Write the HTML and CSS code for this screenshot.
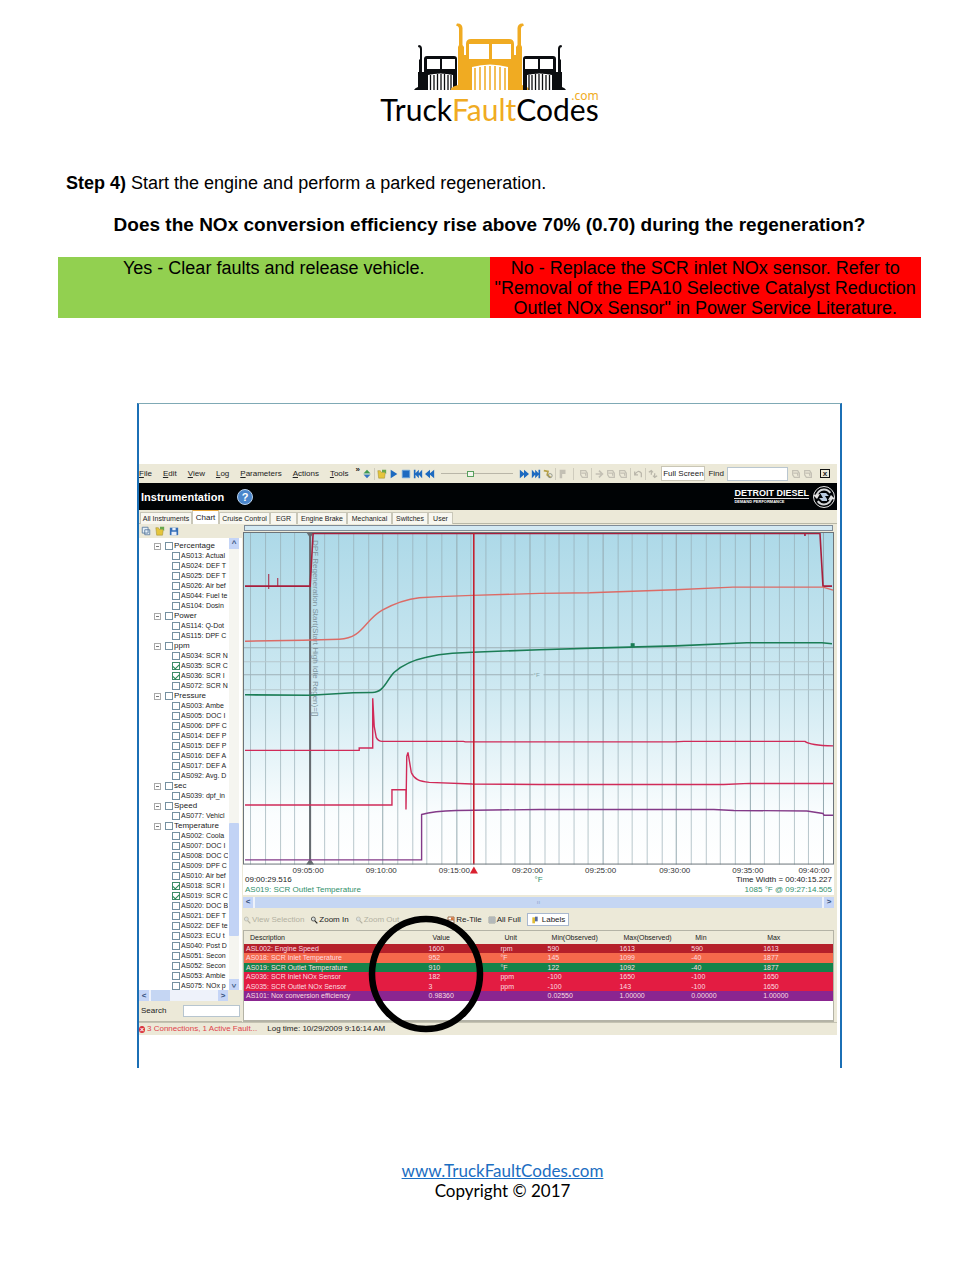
FILE: index.html
```html
<!DOCTYPE html>
<html lang="en">
<head>
<meta charset="utf-8">
<title>Truck Fault Codes - Step 4</title>
<link rel="stylesheet" href="styles.css">
</head>
<body>
<svg class="defs" aria-hidden="true">
  <symbol id="truck" viewBox="0 0 78 67">
    <path fill="currentColor" fill-rule="evenodd" d="M-1 67Q0 64 7 62V24L8 22V6Q8 3 5 2.500L6 .5Q11 0 11.500 5V22L13 24V32H15V21Q15 16 20 16H58Q63 16 63 21V32H65V24L66.500 22V5Q67 0 72 .5L73 2.500Q70 3 70 6V22L71 24V62Q78 64 79 67ZM18 21V36H38V21ZM41 21V36H60V21ZM21 44V67H57V44Q39 39 21 44Z"/>
    <path stroke="currentColor" stroke-width="1.500" d="M24 45V67M29 44V67M34 43V67M39 43V67M44 43V67M49 44V67M54 45V67"/>
  </symbol>
  <symbol id="sidetruck" viewBox="0 0 43 45">
    <path fill="currentColor" fill-rule="evenodd" d="M0 45Q1 43 4 42V27H5V15L6 14V4Q6 2 4 2L4.500 0Q8 0 8 4V27H10V14Q10 11 13 11H40Q43 11 43 14V45ZM13 14V24H26V14ZM28 14V24H41V14ZM14 30V45H39V30Q26 27 14 30Z"/>
    <path stroke="currentColor" stroke-width="1.300" d="M16.500 30V45M20 30V45M23.500 29V45M27 29V45M30.500 29V45M34 30V45M37 30V45"/>
  </symbol>
  <symbol id="i-sync" viewBox="0 0 12 12"><path fill="#3f9a51" d="M6 1L10 5H2Z"/><path fill="#3474c4" d="M6 11L10 7H2Z"/><path stroke="#61a69c" d="M2 6H10"/></symbol>
  <symbol id="i-folder" viewBox="0 0 12 12"><path fill="#e5c53c" stroke="#9b8a31" stroke-width=".6" d="M1 2H4L5 4H10L9 11H2Z"/><path fill="#69a84c" d="M6 1H11V6L9 4H6Z"/></symbol>
  <symbol id="i-play" viewBox="0 0 12 12"><path fill="#1d6ac0" d="M2 1L10 6L2 11Z"/></symbol>
  <symbol id="i-stop" viewBox="0 0 12 12"><path fill="#1d6ac0" stroke="#6aa3dc" d="M1.500 1.500H10.500V10.500H1.500Z"/></symbol>
  <symbol id="i-next" viewBox="0 0 12 12"><path fill="#1d6ac0" d="M1 1L5 5V1L9 5V1H11V11H9V7L5 11V7L1 11Z"/></symbol>
  <symbol id="i-fwd" viewBox="0 0 12 12"><path fill="#1d6ac0" d="M1 1L6 5V1L12 6L6 11V7L1 11Z"/></symbol>
  <symbol id="i-tool" viewBox="0 0 12 12"><path fill="none" stroke="#b6a147" stroke-width="2" d="M1 2L6 3L5 7L9 10"/><circle cx="8.500" cy="8" r="2.500" fill="none" stroke="#858b80"/></symbol>
  <symbol id="i-gray" viewBox="0 0 12 12"><path fill="none" stroke="#c3c0b4" stroke-width="1.500" d="M2 2H8L10 5V10H4L2 7ZM3 5H8V8"/></symbol>
  <symbol id="i-cross" viewBox="0 0 12 12"><path fill="none" stroke="#c3c0b4" stroke-width="2" d="M2 6H11M6 2L10 6L6 10"/></symbol>
  <symbol id="i-flag" viewBox="0 0 12 12"><path fill="#c3c0b4" d="M2 1H9V6H5V11H2Z"/></symbol>
  <symbol id="i-undo" viewBox="0 0 12 12"><path fill="none" stroke="#b9b6aa" stroke-width="1.500" d="M2 3V7H6M2 7Q6 0 10 5V10"/></symbol>
  <symbol id="i-redo" viewBox="0 0 12 12"><path fill="none" stroke="#b9b6aa" stroke-width="1.500" d="M4 2V7M1 4L4 2L6 4M8 10V5M6 8L8 10L11 8"/></symbol>
  <symbol id="i-copy" viewBox="0 0 12 12"><path fill="#e6f0f8" stroke="#55779c" d="M1.500 1.500H8.500V8.500H1.500ZM4.500 4.500H10.500V10.500H4.500Z"/></symbol>
  <symbol id="i-save" viewBox="0 0 12 12"><path fill="#356fb8" d="M1 2H11V11H1Z"/><path fill="#e8eef8" d="M4 2H8V5H4ZM3 7H9V11H3Z"/></symbol>
  <symbol id="i-lens" viewBox="0 0 12 12"><circle cx="5" cy="4.500" r="3" fill="#d9e0df" stroke="currentColor"/><path stroke="currentColor" stroke-width="1.800" d="M7 7L11 11"/></symbol>
  <symbol id="i-grid" viewBox="0 0 12 12"><path fill="#fff" stroke="#777e83" d="M1.500 1.500H10.500V10.500H1.500ZM1.500 4.500H10.500M1.500 7.500H10.500M4.500 1.500V10.500M7.500 1.500V10.500"/></symbol>
  <symbol id="i-tile" viewBox="0 0 12 12"><path fill="#fff" stroke="#9a6a4a" stroke-width="1.500" d="M1.500 1.500H10.500V10.500H1.500ZM1.500 6H10.500"/><path fill="#d9773c" d="M6 2H10V6H6Z"/></symbol>
  <symbol id="i-label" viewBox="0 0 12 12"><path fill="#e0bd37" d="M2 2H6V11H2Z"/><path fill="#566a9d" d="M6 1H10V8H6Z"/></symbol>
</svg>

<header class="brand">
  <div class="trucks">
    <svg class="side"><use href="#sidetruck"/></svg>
    <svg class="front"><use href="#truck"/></svg>
    <svg class="side flip"><use href="#sidetruck"/></svg>
  </div>
  <div class="wordmark">Truck<span class="gold">Fault</span>Codes<small>.com</small></div>
</header>

<main>
  <p class="step"><b>Step 4)</b> Start the engine and perform a parked regeneration.</p>
  <h1>Does the NOx conversion efficiency rise above 70% (0.70) during the regeneration?</h1>
  <div class="answers">
    <div class="yes">Yes - Clear faults and release vehicle.</div>
    <div class="no">No - Replace the SCR inlet NOx sensor. Refer to "Removal of the EPA10 Selective Catalyst Reduction Outlet NOx Sensor" in Power Service Literature.</div>
  </div>

  <figure class="shot">
    <div class="app">
      <div class="toolbar">
        <nav class="menu"><span><u>F</u>ile</span><span><u>E</u>dit</span><span><u>V</u>iew</span><span><u>L</u>og</span><span><u>P</u>arameters</span><span><u>A</u>ctions</span><span><u>T</u>ools</span></nav>
        <b class="more">»</b>
        <button aria-label="Sync"><svg><use href="#i-sync"/></svg></button><i class="sep"></i>
        <button aria-label="Open"><svg><use href="#i-folder"/></svg></button>
        <button aria-label="Play"><svg><use href="#i-play"/></svg></button>
        <button aria-label="Stop"><svg><use href="#i-stop"/></svg></button>
        <button aria-label="First" class="flip"><svg><use href="#i-next"/></svg></button>
        <button aria-label="Rewind" class="flip"><svg><use href="#i-fwd"/></svg></button>
        <input class="seek" type="range" min="0" max="100" value="40" aria-label="Position">
        <button aria-label="Forward"><svg><use href="#i-fwd"/></svg></button>
        <button aria-label="Last"><svg><use href="#i-next"/></svg></button>
        <button aria-label="Settings"><svg><use href="#i-tool"/></svg></button><i class="sep"></i>
        <button aria-label="Flag"><svg><use href="#i-flag"/></svg></button><i class="sep wide"></i>
        <button aria-label="Cut"><svg><use href="#i-gray"/></svg></button><i class="sep"></i>
        <button aria-label="Add"><svg><use href="#i-cross"/></svg></button>
        <button aria-label="Copy"><svg><use href="#i-gray"/></svg></button>
        <button aria-label="Paste"><svg><use href="#i-gray"/></svg></button><i class="sep"></i>
        <button aria-label="Undo"><svg><use href="#i-undo"/></svg></button><i class="sep"></i>
        <button aria-label="Redo"><svg><use href="#i-redo"/></svg></button>
        <button class="full">Full Screen</button>
        <label for="find">Find</label><input id="find" class="find" type="text">
        <button aria-label="Find next"><svg><use href="#i-gray"/></svg></button>
        <button aria-label="Find previous"><svg><use href="#i-gray"/></svg></button>
        <button class="close" aria-label="Close">x</button>
      </div>

      <div class="title">
        <strong>Instrumentation</strong><button class="help" aria-label="Help">?</button>
        <div class="maker"><b>DETROIT DIESEL</b><small>DEMAND PERFORMANCE</small></div>
        <svg class="seal" viewBox="0 0 24 24"><circle cx="12" cy="12" r="10.500" fill="none" stroke="#e4e4e4"/><circle cx="12" cy="12" r="7.500" fill="none" stroke="#d5d8da" stroke-width="2" stroke-dasharray="19 4.500"/><path fill="#e4e4e4" d="M1 10L8 9L5 14ZM23 14L16 15L19 10Z"/><path fill="#b9cbe0" d="M8 8H14L17 11H13L15 14V16H10L7 13H11Z"/></svg>
      </div>

      <div class="tabs">
        <button>All Instruments</button><button class="on">Chart</button><button>Cruise Control</button><button>EGR</button><button>Engine Brake</button><button>Mechanical</button><button>Switches</button><button>User</button>
      </div>

      <div class="work">
        <aside>
          <div class="files">
            <button aria-label="Copy"><svg><use href="#i-copy"/></svg></button><button aria-label="Open"><svg><use href="#i-folder"/></svg></button><button aria-label="Save"><svg><use href="#i-save"/></svg></button>
          </div>
          <div class="treebox">
            <div class="tree" id="tree"></div>
            <div class="vbar"><button aria-label="Scroll up">^</button><span class="rail"></span><span class="thumb"></span><button class="down" aria-label="Scroll down">^</button></div>
          </div>
          <div class="hbar short"><button aria-label="Scroll left">&lt;</button><span class="thumb"></span><button aria-label="Scroll right">&gt;</button></div>
          <div class="search"><label for="search">Search</label><input id="search" type="text"></div>
        </aside>

        <section class="view">
          <div class="range"></div>
          <svg class="plot" viewBox="0 0 590 342">
            <defs><linearGradient id="sky" x1="0" y1="0" x2="0" y2="1"><stop offset="0" stop-color="#add9e8"/><stop offset=".45" stop-color="#cce8f1"/><stop offset=".85" stop-color="#fafdfe"/><stop offset="1" stop-color="#fff"/></linearGradient></defs>
            <rect width="590" height="332" fill="url(#sky)"/>
            <g id="grid" fill="none" stroke="#94a9b0"></g>
            <path fill="none" stroke="#9fb0b6" d="M0 115.500H590M0 142.500H290M300 142.500H590"/>
            <path fill="none" stroke="#b5c6cc" d="M0 129.500H590M0 157.500H590"/>
            <path stroke="#666b70" stroke-width="2" d="M67 0V332"/>
            <path fill="#666b70" d="M63 0H71L67 6ZM63 332H71L67 326Z"/>
            <text class="note" transform="translate(70 8) rotate(90)">DPF Regeneration Start(Start High Idle Regen)=[]</text>
            <text class="tiny" x="290" y="145">°F</text>
            <g fill="none" stroke-width="1.400">
              <path stroke="#a81e3c" stroke-width="1.600" d="M2 54H67L70 1.500H576L579 54H588M561 1V4"/>
              <path stroke="#a81e3c" stroke-width="1" d="M25.700 42V57M34.700 46V54"/>
              <path stroke="#dc6b66" d="M2 109L60 108L96 107C120 106 120 89 139 78C154 70 164 67 176 65.700L196 64.500L229 63.300L296 61.300L346 60.700L432 57.700L489 55H579L589 58"/>
              <path stroke="#1b7d56" stroke-width="1.600" d="M2 162.500L67 163L110 160.500L129 160.300C141 160 143 148 151 140C160 132 169 128 183 125Q195 122 209 121L229 120L296 117.500L358 115.700L432 113.700L503 110.500H578L588 111.500"/>
              <path stroke="#d02a58" d="M2 218H116V215.700H129.500V166L131 194L133 205Q135 209 139 209H220L222 209.500H430L440 209H561Q566 213 589 213.500"/>
              <path stroke="#d02a58" d="M2 272.500H148.700V257.300H162.700V277L163.500 224L164.700 220L168 240C171 247 176 249 186 250L229 251.500L296 252H480L506 251H589"/>
              <path stroke="#833a88" d="M2 327.300H178.300V282Q190 278.500 213 278L296 277H470L490 278L563 278.500L579 281L580 282.700H589"/>
            </g>
            <rect x="387" y="111" width="4" height="4" fill="#1b7d56"/>
            <path stroke="#c3202f" stroke-width="1.600" d="M230.400 0V332"/>
            <path fill="#d9202f" d="M230.500 334L234.500 341H226.500Z"/>
            <rect x=".5" y=".5" width="589" height="331" fill="none" stroke="#6c747a"/>
            <g class="ticks"><text x="65" y="340">09:05:00</text><text x="138" y="340">09:10:00</text><text x="211" y="340">09:15:00</text><text x="284" y="340">09:20:00</text><text x="357" y="340">09:25:00</text><text x="431" y="340">09:30:00</text><text x="504" y="340">09:35:00</text><text x="570" y="340">09:40:00</text></g>
          </svg>
          <div class="line"><span>09:00:29.516</span><span class="green">°F</span><span>Time Width = 00:40:15.227</span></div>
          <div class="line green"><span>AS019: SCR Outlet Temperature</span><span></span><span>1085 °F @ 09:27:14.505</span></div>
          <div class="hbar long"><button aria-label="Scroll left">&lt;</button><span class="thumb">ıı</span><button aria-label="Scroll right">&gt;</button></div>
          <div class="zoom">
            <button disabled><svg><use href="#i-lens"/></svg>View Selection</button>
            <button><svg><use href="#i-lens"/></svg>Zoom In</button>
            <button disabled><svg><use href="#i-lens"/></svg>Zoom Out</button>
            <button class="tile"><svg><use href="#i-tile"/></svg>Re-Tile</button>
            <button><svg><use href="#i-grid"/></svg>All Full</button>
            <button class="labels"><svg><use href="#i-label"/></svg>Labels</button>
          </div>
          <div class="data">
            <table>
              <thead><tr><th class="desc">Description</th><th>Value</th><th class="unit">Unit</th><th>Min(Observed)</th><th>Max(Observed)</th><th>Min</th><th>Max</th></tr></thead>
              <tbody>
                <tr class="brick"><td>ASL002: Engine Speed</td><td>1600</td><td>rpm</td><td>590</td><td>1613</td><td>590</td><td>1613</td></tr>
                <tr class="coral"><td>AS018: SCR Inlet Temperature</td><td>952</td><td>°F</td><td>145</td><td>1099</td><td>-40</td><td>1877</td></tr>
                <tr class="leaf"><td>AS019: SCR Outlet Temperature</td><td>910</td><td>°F</td><td>122</td><td>1092</td><td>-40</td><td>1877</td></tr>
                <tr class="rose"><td>AS036: SCR Inlet NOx Sensor</td><td>182</td><td>ppm</td><td>-100</td><td>1650</td><td>-100</td><td>1650</td></tr>
                <tr class="rose"><td>AS035: SCR Outlet NOx Sensor</td><td>3</td><td>ppm</td><td>-100</td><td>143</td><td>-100</td><td>1650</td></tr>
                <tr class="plum"><td>AS101: Nox conversion efficiency</td><td>0.98360</td><td></td><td>0.02550</td><td>1.00000</td><td>0.00000</td><td>1.00000</td></tr>
              </tbody>
            </table>
          </div>
          <svg class="ring" viewBox="0 0 116 118"><ellipse cx="58" cy="59" rx="54" ry="55" fill="none" stroke="#000" stroke-width="6.500"/></svg>
        </section>
      </div>
      <div class="status"><i>×</i><span class="alert">3 Connections, 1 Active Fault...</span><span>Log time: 10/29/2009 9:16:14 AM</span></div>
    </div>
  </figure>
</main>

<footer><a href="#">www.TruckFaultCodes.com</a><span>Copyright © 2017</span></footer>
<script src="tree.js"></script>
</body>
</html>
```
FILE: tree.js
```js
const groups = [
  ["Percentage", ["AS013: Actual", "AS024: DEF T", "AS025: DEF T", "AS026: Air bef", "AS044: Fuel te", "AS104: Dosin"]],
  ["Power", ["AS114: Q-Dot", "AS115: DPF C"]],
  ["ppm", ["AS034: SCR N", "*AS035: SCR C", "*AS036: SCR I", "AS072: SCR N"]],
  ["Pressure", ["AS003: Ambe", "AS005: DOC I", "AS006: DPF C", "AS014: DEF P", "AS015: DEF P", "AS016: DEF A", "AS017: DEF A", "AS092: Avg. D"]],
  ["sec", ["AS039: dpf_in"]],
  ["Speed", ["AS077: Vehicl"]],
  ["Temperature", ["AS002: Coola", "AS007: DOC I", "AS008: DOC C", "AS009: DPF C", "AS010: Air bef", "*AS018: SCR I", "*AS019: SCR C", "AS020: DOC B", "AS021: DEF T", "AS022: DEF te", "AS023: ECU t", "AS040: Post D", "AS051: Secon", "AS052: Secon", "AS053: Ambie", "AS075: NOx p"]]
];
const row = (cls, text, on) =>
  `<label class="${cls}"><input type="checkbox"${on ? " checked" : ""}>${text}</label>`;
document.getElementById("tree").innerHTML = groups.map(([name, items]) =>
  row("group", name, false) +
  items.map(t => row("item", t.replace("*", ""), t.startsWith("*"))).join("")
).join("");

let lines = "";
for (let i = 0; i < 40; i++) {
  const x = Math.round(7.3 + i * 14.66) + 0.5;
  lines += `<path opacity="${i % 5 === 4 ? 1 : 0.65}" d="M${x} 0V332"/>`;
}
document.getElementById("grid").innerHTML = lines;
```
FILE: styles.css
```css
* { box-sizing: border-box; }
body { margin: 0; background: #fff; color: #000; font-family: "Liberation Sans", Arial, sans-serif; }
button, input { font: inherit; color: inherit; margin: 0; padding: 0; border: 0; background: none; }
.defs { position: absolute; width: 0; height: 0; }

.brand { display: flex; flex-direction: column; align-items: center; padding-top: 23px; }
.trucks { display: flex; align-items: flex-end; color: #0b0d10; }
.trucks svg { overflow: visible; }
.side { width: 43px; height: 45px; }
.front { width: 78px; height: 67px; color: #f0ab22; margin: 0 -6px; position: relative; }
.wordmark { position: relative; font-family: Lato, sans-serif; font-size: 30px; line-height: 38px; height: 38px; }
.gold { color: #f0ab22; }
.wordmark small { position: absolute; right: 0; top: 0; font: 12px/12px "Noto Sans", sans-serif; color: #f0ab22; }

main { padding: 0 58px; }
.step { margin: 45px 8px 0; font-size: 18px; line-height: 20px; }
h1 { margin: 21px 0; font-size: 19px; line-height: 22px; text-align: center; }
.answers { display: grid; grid-template-columns: 1fr 1fr; text-align: center; font-size: 18px; line-height: 20px; }
.answers > div { padding: 1px 4px 0; }
.yes { background: #92d050; }
.no { background: #f00; }

.shot { width: 82%; max-width: 705px; margin: 85px auto 0; padding: 60px 3px 33px 0; border: solid #1b6fb5; border-width: 1px 2px 0; border-top-color: #7fa9b5; }
.app { background: #ece9d8; font-size: 8px; line-height: 10px; color: #222; }
.app button { display: flex; align-items: center; justify-content: center; flex: none; white-space: nowrap; }
.app button svg { width: 10px; height: 10px; flex: none; }

.toolbar { display: flex; align-items: center; height: 19px; }
.toolbar button { width: 12px; height: 12px; }
.menu { display: flex; gap: 11px; }
.more { margin: 0 1px 8px 7px; }
.flip { transform: scaleX(-1); }
.sep { width: 1px; height: 12px; background: #cfccbd; margin: 0 1px; }
.sep.wide { margin: 0 4px; }
.seek { appearance: none; flex: 1; min-width: 20px; height: 12px; margin: 0 5px; background: linear-gradient(#b9b6a8, #b9b6a8) center / 100% 1px no-repeat; }
.seek::-webkit-slider-thumb { appearance: none; width: 7px; height: 6px; background: #f4f6ee; border: 1px solid #57a05d; }
.toolbar .full { width: 44px; height: 15px; margin: 0 3px 0 2px; background: #fff; border: 1px solid #c9c6b6; }
.find { width: 61px; height: 14px; margin: 0 2px 0 3px; background: #fff; border: 1px solid #b9c6d0; }
.toolbar .close { width: 10px; height: 9px; margin: 0 7px 0 6px; border: 1px solid #111; font-weight: bold; line-height: 6px; }

.title { display: flex; align-items: center; height: 27px; padding: 0 1px 0 2px; background: #000305; color: #fff; }
.title strong { font-size: 11px; }
.title .help { width: 16px; height: 16px; margin-left: 13px; border: 1px solid #b9d2ec; border-radius: 50%; background: #4a86cc; font-weight: bold; font-size: 11px; }
.maker { margin-left: auto; margin-right: 3px; display: flex; flex-direction: column; }
.maker b { font-size: 9px; line-height: 9px; border-bottom: 1px solid #ddd; }
.maker small { font-size: 4px; line-height: 6px; font-weight: bold; }
.seal { width: 24px; height: 24px; }

.tabs { display: grid; grid-template-columns: 52px 27px 51px 27px 50px 45px 36px 25px; height: 14px; padding-left: 1px; align-items: end; font-size: 7px; border-bottom: 1px solid #b9b8a8; }
.tabs button { height: 12px; background: #f8f7f0; border: 1px solid #c9c7b8; border-bottom: 0; }
.tabs .on { height: 14px; background: #fff; border-top: 1px solid #e6a63c; font-size: 8px; }

.work { display: flex; height: 498px; }
aside { width: 103px; flex: none; display: flex; flex-direction: column; }
.files { display: flex; gap: 4px; padding: 0 2px; height: 14px; }
.treebox { flex: 1; display: flex; min-height: 0; background: #fff; }
.tree { flex: 1; min-width: 0; overflow: hidden; padding-top: 3px; }
.tree label { display: flex; align-items: center; height: 10px; line-height: 10px; white-space: nowrap; }
.tree input { appearance: none; flex: none; display: flex; justify-content: center; width: 8px; height: 8px; border: 1px solid #7590a0; background: #fff; margin-right: 1px; }
.tree input:checked { border-color: #3d8a68; }
.tree input:checked::before { content: ""; width: 3px; height: 5px; border: solid #258a52; border-width: 0 1px 1px 0; transform: rotate(45deg); }
.group { padding-left: 15px; }
.group::before { content: ""; width: 5px; height: 5px; margin-right: 4px; border: 1px solid #aaa; background: linear-gradient(#777, #777) center / 3px 1px no-repeat; }
.item { padding-left: 33px; font-size: 7px; }
.vbar { width: 10px; margin: 0 3px 0 1px; display: flex; flex-direction: column; background: #f5f5f0; }
.vbar button, .hbar button { width: 10px; height: 11px; background: #c5d5f7; color: #34507c; font-weight: bold; }
.rail { flex: 270; }
.vbar .thumb { flex: 112; margin-bottom: 43px; background: #c2d3f5; border-radius: 1px; }
.down { transform: rotate(180deg); }
.hbar { display: flex; gap: 2px; height: 11px; background: #eef2fa; }
.hbar .thumb { background: #c5d6f3; flex: 1; text-align: center; color: #8fa5cc; font-size: 6px; }
.short .thumb { flex: none; width: 19px; margin-right: auto; }
.short { margin-right: 14px; }
.search { display: flex; align-items: center; justify-content: space-between; height: 21px; padding: 0 2px; border-bottom: 1px solid #bbb9a9; }
.search input { width: 57px; height: 12px; background: #fff; border: 1px solid #b7c5cf; }

.view { position: relative; flex: 1; min-width: 0; margin-left: 1px; padding-right: 3px; display: flex; flex-direction: column; }
.range { flex: none; height: 6px; margin: 1px; background: #d3e9f3; border: 1px solid #7f8b97; }
.plot { display: block; width: 100%; background: #fff; }
.ticks text { font-size: 8px; text-anchor: middle; fill: #333; }
.note { font-size: 8px; fill: #7d929b; }
.tiny { font-size: 6px; fill: #88a5aa; }
.line { display: grid; grid-template-columns: 1fr auto 1fr; padding: 0 2px; background: #fff; }
.line span:last-child { text-align: right; }
.green { color: #2f8f6a; }
.long { margin-top: 2px; flex: none; }
.zoom { display: flex; align-items: center; gap: 6px; height: 14px; margin: 5px 0 3px; }
.zoom button { gap: 1px; height: 13px; }
.zoom button svg { width: 8px; height: 8px; }
.zoom button:disabled { color: #b3b1a2; }
.zoom .tile { margin-left: 42px; }
.zoom .labels { padding: 0 3px; background: #fff; border: 1px solid #a9b8cf; gap: 3px; }
.data { flex: 1; background: #fff; border: 1px solid #b4b3a6; border-width: 1px 1px 2px; }
table { width: 100%; height: 70px; table-layout: fixed; border-collapse: collapse; font-size: 7px; line-height: 9px; }
th, td { padding: 0 2px; text-align: left; font-weight: normal; white-space: nowrap; }
th { height: 13px; padding-left: 6px; background: #ece9d8; }
th.desc { width: 31%; }
th.unit { width: 8%; }
td { color: #fbdde0; }
.brick { background: #b5202a; }
.coral { background: #f5694b; }
.leaf { background: #14834a; }
.rose { background: #e31c42; }
.plum { background: #8b2590; }
.ring { position: absolute; left: 21%; bottom: -11px; width: 116px; height: 118px; }
.status { display: flex; align-items: center; height: 13px; border-top: 1px solid #c5c3b2; }
.status i { width: 6px; height: 7px; border-radius: 50%; background: #d9303a; color: #fff; font: bold 7px/7px "Liberation Sans"; text-align: center; margin-right: 2px; }
.alert { color: #e0424a; margin-right: 10px; }

footer { display: flex; flex-direction: column; align-items: center; padding: 93px 0 64px 26px; font-family: Lato, sans-serif; font-size: 17px; line-height: 20px; }
footer a { color: #1b6ec2; }
```
